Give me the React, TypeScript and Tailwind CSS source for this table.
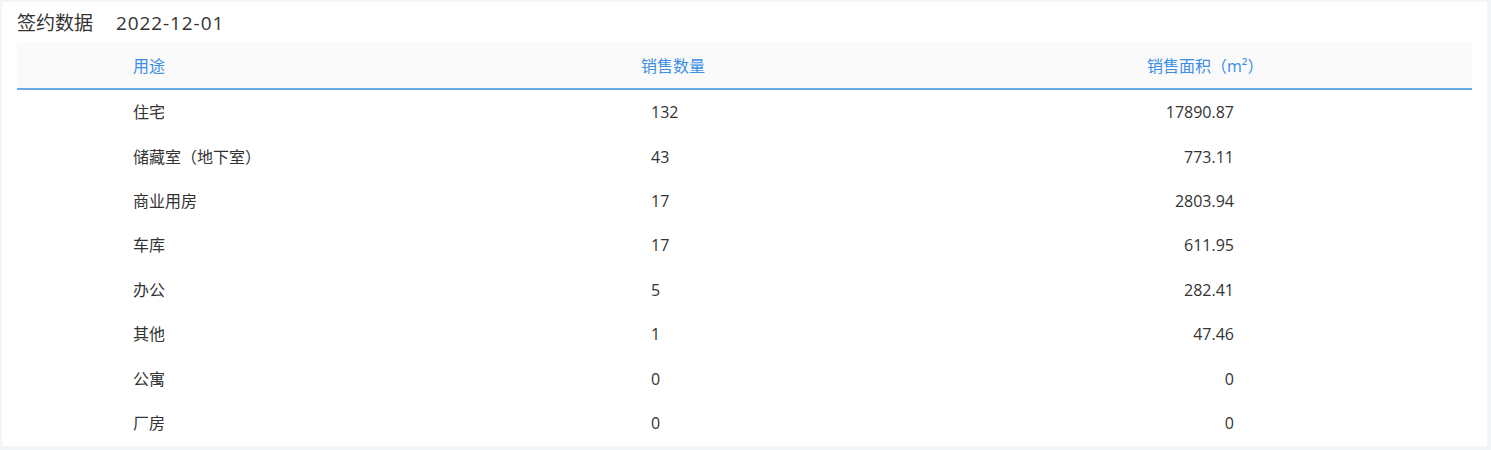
import React from "react";

const rows: [string, string, string][] = [
  ["住宅", "132", "17890.87"],
  ["储藏室（地下室）", "43", "773.11"],
  ["商业用房", "17", "2803.94"],
  ["车库", "17", "611.95"],
  ["办公", "5", "282.41"],
  ["其他", "1", "47.46"],
  ["公寓", "0", "0"],
  ["厂房", "0", "0"],
];

export default function App() {
  return (
    <div
      className="w-[1491px] h-[450px] bg-[#f4f5f7] pt-[2px] pl-[2px] overflow-hidden"
      style={{ fontFamily: '"Open Sans", "Noto Sans CJK SC", sans-serif' }}
    >
      <div className="w-[1485px] h-[444px] bg-white px-[15px] flex flex-col">
        <div className="h-[41px] flex items-center text-[19px] text-[#333] leading-none pt-[2px]">
          <span>签约数据</span>
          <span className="ml-[23px] tracking-[0.9px]">2022-12-01</span>
        </div>
        <div className="w-[1455px]">
          <div className="grid grid-cols-[624px_506px_1fr] h-[47px] bg-[#fafafa] border-b-2 border-[#6aaae4] items-center text-[16px] text-[#3a8ee6]">
            <div className="pl-[116px]">用途</div>
            <div>销售数量</div>
            <div>销售面积（m²）</div>
          </div>
          {rows.map((r) => (
            <div
              key={r[0]}
              className="grid grid-cols-[624px_506px_1fr] h-[44.4px] items-center text-[16px] text-[#333]"
            >
              <div className="pl-[116px]">{r[0]}</div>
              <div className="pl-[10px]">{r[1]}</div>
              <div className="text-right pr-[238px]">{r[2]}</div>
            </div>
          ))}
        </div>
      </div>
    </div>
  );
}
